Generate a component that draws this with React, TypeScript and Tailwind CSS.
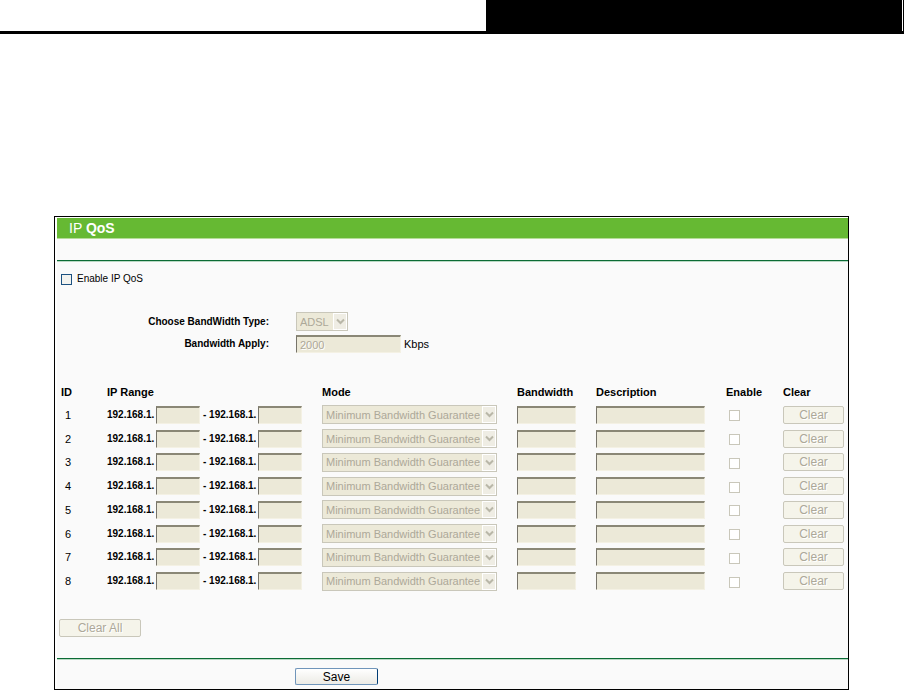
import React, { useState } from 'react';
import { clsx } from 'clsx';

const ROWS = [1, 2, 3, 4, 5, 6, 7, 8];
const PREFIX = '192.168.1.';

const TextField = ({ className, ...props }: React.InputHTMLAttributes<HTMLInputElement>) => (
  <input
    type="text"
    className={clsx(
      'block h-[18px] shrink-0 border border-t-2 border-l-[#77746a] border-t-[#8a8776] border-r-[#f4f1e4] border-b-[#f4f1e4] bg-[#ece9d8] pl-[3px] text-[#aca899]',
      className
    )}
    {...props}
  />
);

const SelectBox = ({ className, options, ...props }: React.SelectHTMLAttributes<HTMLSelectElement> & { options: string[] }) => (
  <div className={clsx('relative', className)}>
    <select
      className="block h-[19px] w-full appearance-none border border-[#c9c7ba] bg-[#ece9d8] pl-[3px] text-[11px] leading-4 text-[#aca899] opacity-100"
      {...props}
    >
      {options.map((o) => (
        <option key={o}>{o}</option>
      ))}
    </select>
    {/* Drop-down arrow */}
    <span className="pointer-events-none absolute top-px right-px flex h-[17px] w-[14px] items-center justify-center border border-white bg-[#efede4]">
      <svg width="9" height="7" viewBox="0 0 9 7" fill="none" stroke="#b9b7a8" strokeWidth="2">
        <path d="M1 1.5 4.5 5 8 1.5" />
      </svg>
    </span>
  </div>
);

const CheckBox = ({ className, ...props }: React.InputHTMLAttributes<HTMLInputElement>) => (
  <input
    type="checkbox"
    className={clsx('block h-[11px] w-[11px] appearance-none border checked:bg-[#21a121]', className)}
    {...props}
  />
);

const disabledButton =
  'block h-[18px] rounded-xs border border-[#c9c7ba] bg-[#f5f4ea] text-center text-xs leading-4 text-[#aca899] [text-shadow:1px_1px_0_white]';

const Divider = () => <div className="h-[2px] border-t border-[#0b6b35] bg-[#b9d9c4]" />;

export default function App() {
  const [enabled, setEnabled] = useState(false);

  return (
    <div className="bg-white font-['Liberation_Sans',Arial,sans-serif] text-[11px] leading-4 text-black">
      <header className="flex h-[34px] justify-end border-b-3 border-black">
        <div className="w-[46.1%] border-r border-white bg-black" />
        <div className="w-px bg-black" />
      </header>

      <main className="mt-[182px] mr-[55px] ml-[54px] border border-black pt-px pl-[2px]">
        <div className="bg-[#fafafa]">
          <h1 className="h-[21px] border-b border-[#b5dc98] bg-[#66b933] pl-3 text-sm leading-5 text-white">
            IP <b>QoS</b>
          </h1>
          <div className="h-[21px]" />
          <Divider />

          <label className="flex h-[34px] items-center gap-[5px] pl-1">
            <CheckBox
              checked={enabled}
              onChange={(e) => setEnabled(e.target.checked)}
              className="border-[#1c5180] bg-[#f3f3ef]"
            />
            <span className="text-[10px]">Enable IP QoS</span>
          </label>

          <div className="mt-4 space-y-1">
            <div className="flex items-center gap-[27px]">
              <label htmlFor="type" className="w-[212px] text-right text-[10px] font-bold">Choose BandWidth Type:</label>
              <SelectBox id="type" disabled options={['ADSL']} className="w-[52px]" />
            </div>
            <div className="flex items-center gap-[27px]">
              <label htmlFor="apply" className="w-[212px] text-right text-[10px] font-bold">Bandwidth Apply:</label>
              <div className="flex items-center gap-[3px]">
                <TextField id="apply" disabled defaultValue="2000" className="w-[105px] [text-shadow:1px_1px_0_white]" />
                Kbps
              </div>
            </div>
          </div>

          <table className="mt-[28px] h-[212px] w-full table-fixed border-collapse text-left">
            <colgroup>
              <col className="w-[50px]" />
              <col className="w-[215px]" />
              <col className="w-[195px]" />
              <col className="w-[79px]" />
              <col className="w-[130px]" />
              <col className="w-[57px]" />
              <col className="w-[65px]" />
            </colgroup>
            <thead>
              <tr className="h-[22px]">
                <th className="pl-1">ID</th>
                <th>IP Range</th>
                <th>Mode</th>
                <th>Bandwidth</th>
                <th>Description</th>
                <th>Enable</th>
                <th>Clear</th>
              </tr>
            </thead>
            <tbody>
              {ROWS.map((id) => (
                <tr key={id}>
                  <td className="pl-2">{id}</td>
                  <td>
                    <div className="flex items-center text-[10px] font-bold whitespace-nowrap">
                      <span className="w-[49px]">{PREFIX}</span>
                      <TextField disabled aria-label={`Start address ${id}`} className="w-[44px]" />
                      <span className="w-[58px] pl-[3px]">- {PREFIX}</span>
                      <TextField disabled aria-label={`End address ${id}`} className="w-[44px]" />
                    </div>
                  </td>
                  <td>
                    <SelectBox
                      disabled
                      aria-label={`Mode ${id}`}
                      options={['Minimum Bandwidth Guarantee', 'Maximum Bandwidth Limit']}
                      className="w-[175px]"
                    />
                  </td>
                  <td>
                    <TextField disabled aria-label={`Bandwidth ${id}`} className="w-[59px]" />
                  </td>
                  <td>
                    <TextField disabled aria-label={`Description ${id}`} className="w-[109px]" />
                  </td>
                  <td className="pt-[2px] pl-[3px]">
                    <CheckBox disabled aria-label={`Enable ${id}`} className="border-[#c9c7ba] bg-white" />
                  </td>
                  <td>
                    <button type="button" disabled className={clsx(disabledButton, 'w-[61px]')}>Clear</button>
                  </td>
                </tr>
              ))}
            </tbody>
          </table>

          <button type="button" disabled className={clsx(disabledButton, 'mt-[26px] mb-[21px] ml-[2px] w-[82px]')}>
            Clear All
          </button>

          <Divider />

          <div className="pt-2 pb-1 pl-[238px]">
            <button
              type="button"
              className="block h-[17px] w-[83px] rounded-xs border border-[#7095ba] border-r-[#003c74] bg-linear-to-b from-white to-[#ecebe5] text-xs leading-4"
            >
              Save
            </button>
          </div>
        </div>
      </main>
    </div>
  );
}
